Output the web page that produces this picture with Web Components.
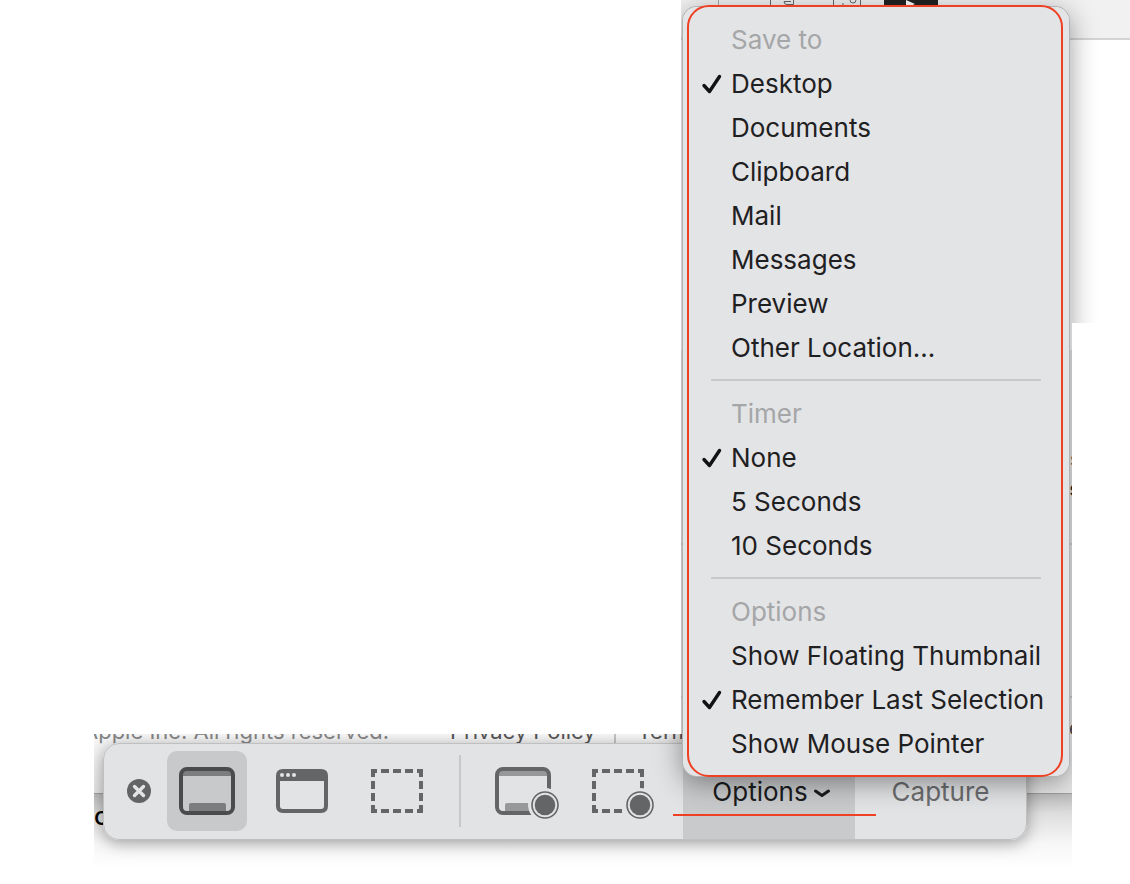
<!DOCTYPE html>
<html lang="en">
<head>
<meta charset="utf-8">
<title>Screenshot toolbar</title>
<style>
html, body { margin: 0; background: #fff; font-family: Inter, "Liberation Sans", sans-serif; }
</style>
</head>
<body>
<capture-page></capture-page>

<template id="t-page">
<style>
:host { display: flex; flex-direction: column; min-height: 100vh; overflow: hidden; }
page-backdrop { flex: 1; margin-left: 681px; }
.strip { position: relative; box-sizing: border-box; height: 150px; margin: 0 58px 0 94px; padding: 9px 45px 0 9px; }
footer-backdrop { position: absolute; inset: 0; }
.mark { position: absolute; left: -10px; right: -21px; top: 70px; height: 2px; background: #ee4023; }
</style>
<page-backdrop></page-backdrop>
<div class="strip">
  <footer-backdrop></footer-backdrop>
  <capture-toolbar>
    <tool-button kind="screen" label="Capture Entire Screen" selected></tool-button>
    <tool-button kind="window" label="Capture Selected Window"></tool-button>
    <tool-button kind="area" label="Capture Selected Portion"></tool-button>
    <tool-button slot="record" kind="record-screen" label="Record Entire Screen"></tool-button>
    <tool-button slot="record" kind="record-area" label="Record Selected Portion"></tool-button>
    <options-menu slot="menu">
      <menu-group label="Save to">
        <menu-choice checked>Desktop</menu-choice>
        <menu-choice>Documents</menu-choice>
        <menu-choice>Clipboard</menu-choice>
        <menu-choice>Mail</menu-choice>
        <menu-choice>Messages</menu-choice>
        <menu-choice>Preview</menu-choice>
        <menu-choice>Other Location...</menu-choice>
      </menu-group>
      <menu-group label="Timer">
        <menu-choice checked>None</menu-choice>
        <menu-choice>5 Seconds</menu-choice>
        <menu-choice>10 Seconds</menu-choice>
      </menu-group>
      <menu-group label="Options">
        <menu-choice>Show Floating Thumbnail</menu-choice>
        <menu-choice checked>Remember Last Selection</menu-choice>
        <menu-choice>Show Mouse Pointer</menu-choice>
      </menu-group>
    </options-menu>
    <div class="mark" slot="menu"></div>
  </capture-toolbar>
</div>
</template>

<template id="t-backdrop">
<style>
:host { display: flex; flex-direction: column; }
.head { height: 38px; background: #f1f1f1; border-bottom: 2px solid #d4d4d4; }
.head svg { display: block; }
.blank { height: 283px; }
.side { flex: 1; margin-right: 58px; overflow: hidden; background: linear-gradient(#fff 27px, #ececec 27px); }
.rule { height: 2px; background: #cfcfcf; }
.gap1, .gap2 { box-sizing: border-box; margin-right: -8px; font-size: 19px; line-height: 30px; text-align: right; color: #555; }
.gap1 { height: 220px; padding-top: 92px; }
.gap2 { height: 151px; }
.bold { font-weight: 600; color: #222; }
.last { margin-right: -8px; font-size: 19px; line-height: 10px; padding-top: 26px; text-align: right; color: #444; }
</style>
<div class="head">
<svg width="449" height="8" viewBox="0 0 449 8" fill="none" stroke="#666" stroke-width="1" aria-hidden="true">
<path d="M37.500 0V8" stroke="#aaa"/><path d="M89.500 0V8M112.500 0V4.500H106Q103 4.500 103 1.500H110M152.500 0V8M179.500 0V8"/><circle cx="172" cy="0" r="3"/><path d="M161 4h2"/>
<rect x="203" y="0" width="54" height="8" fill="#222" stroke="none"/><path d="M225 0L234 4L225 8Z" fill="#fff" stroke="none"/>
</svg>
</div>
<div class="blank"></div>
<div class="side"><div class="gap1"><div>l</div><div>s</div><div class="bold">s</div></div><div class="rule"></div><div class="gap2"></div><div class="rule"></div><div class="last">e</div></div>
</template>

<template id="t-footer">
<style>
:host { display: block; overflow: hidden; }
.win { display: flex; box-sizing: border-box; height: 60px; overflow: hidden; white-space: nowrap; background: linear-gradient(#f8f8f8, #e6e6e6); border-bottom: 1px solid #a0a0a0; font-size: 22px; line-height: 24px; color: #858585; }
.win span, .win a { margin-top: -15px; height: 24px; text-decoration: none; }
.win span { width: 356px; text-indent: -11px; }
.win a { color: #555; }
.win i { width: 2px; height: 9px; margin: 0 22px 0 18px; background: #c4c4c4; }
.fade { height: 90px; background: linear-gradient(#bcbcbc, #dedede 20px, #f7f7f7 50px, #fff 75px); font-size: 25px; line-height: 44px; font-weight: 500; color: #000; }
.shade { position: absolute; top: 9px; left: 9px; right: 45px; height: 97px; border-radius: 16px; box-shadow: 0 3px 16px rgba(0,0,0,.36); }
</style>
<div class="win"><span>Apple Inc. All rights reserved.</span><a href="#privacy">Privacy Policy</a><i></i><a href="#terms">Terms</a></div>
<div class="fade">c</div>
<div class="shade"></div>
</template>

<template id="t-toolbar">
<style>
:host { display: flex; box-sizing: border-box; height: 97px; position: relative; border: 1px solid #bfc0c1; border-radius: 16px; background: #e2e3e5; align-items: flex-start; }
button { font: inherit; border: 0; padding: 0; background: none; }
.close { width: 24px; height: 24px; margin: 35px 16px 0 23px; flex: none; }
svg { display: block; }
.tools { display: flex; gap: 15px; margin-top: 7px; }
.line { width: 2px; height: 72px; margin: 11px 22px 0; background: #c7c8ca; flex: none; }
.opt { position: relative; align-self: stretch; width: 172px; margin-left: 25px; flex: none; }
.opt button { display: flex; align-items: center; justify-content: center; gap: 5px; width: 100%; height: 100%; padding-left: 5px; background: #c9cacc; color: #1b1c1e; font-size: 26px; line-height: 32px; }
.cap { flex: 1; align-self: stretch; color: #6b6c6e; font-size: 26px; line-height: 32px; border-radius: 0 15px 15px 0; }
</style>
<button class="close" aria-label="Close"><svg width="24" height="24" viewBox="0 0 24 24"><circle cx="12" cy="12" r="12" fill="#636466"/><path d="M7.500 7.500L16.500 16.500M16.500 7.500L7.500 16.500" stroke="#e3e4e6" stroke-width="3.400" stroke-linecap="round"/></svg></button>
<div class="tools"><slot></slot></div>
<div class="line"></div>
<div class="tools"><slot name="record"></slot></div>
<div class="opt"><button aria-haspopup="menu" aria-expanded="true">Options<svg width="18" height="12" viewBox="0 0 18 12" fill="none" stroke="#1b1c1e" stroke-width="3" stroke-linecap="round" stroke-linejoin="round" aria-hidden="true"><path d="M2.500 5L9 9.500L15.500 5"/></svg></button><slot name="menu"></slot></div>
<button class="cap">Capture</button>
</template>

<template id="t-menu">
<style>
:host { position: absolute; left: 0; bottom: 63px; width: 386px; z-index: 2; }
.shadow { position: absolute; inset: 0; border-radius: 14px; box-shadow: 0 0 0 1px #b2b3b4, 0 6px 28px rgba(0,0,0,.42);
  clip-path: polygon(-2px -8px, calc(100% + 40px) -8px, calc(100% + 40px) 316px, calc(100% + 3px) 316px, calc(100% + 3px) calc(100% + 50px), -50px calc(100% + 50px), -50px calc(100% - 42px), -2px calc(100% - 42px)); }
.panel { position: relative; padding: 11px 0 10px; border-radius: 14px; background: #e3e4e6; }
.frame { position: absolute; inset: -2px 6px -1px 4px; border: 2px solid #ee4023; border-radius: 22px; pointer-events: none; }
</style>
<div class="shadow"></div>
<div class="panel" role="menu"><slot></slot></div>
<div class="frame"></div>
</template>

<template id="t-group">
<style>
:host { display: block; }
:host(:not(:first-child))::before { content: ""; display: block; height: 2px; margin: 9px 28px 11px; background: #c8c9cb; }
.title { padding-left: 48px; font-size: 26px; line-height: 44px; color: #a5a6a8; }
</style>
<div class="title"></div><slot></slot>
</template>

<template id="t-choice">
<style>
:host { display: block; }
button { display: flex; align-items: center; width: 100%; height: 44px; padding: 0 0 0 18px; border: 0; background: none; font: inherit; font-size: 26px; line-height: 44px; color: #1f2022; white-space: nowrap; text-align: left; }
svg { flex: none; width: 22px; height: 22px; margin-right: 8px; visibility: hidden; }
:host([checked]) svg { visibility: visible; }
</style>
<button role="menuitemradio"><svg viewBox="0 0 22 22" fill="none" stroke="#111214" stroke-width="3.400" stroke-linecap="round" stroke-linejoin="round" aria-hidden="true"><path d="M3 12.500L8.500 18.500L18.500 3.500"/></svg><slot></slot></button>
</template>

<script>
const clone = id => document.getElementById(id).content.cloneNode(true);
function define(name, id, setup) {
  customElements.define(name, class extends HTMLElement {
    constructor() {
      super();
      this.attachShadow({ mode: "open" }).append(clone(id));
    }
    connectedCallback() { if (setup) setup(this); }
  });
}

// Dashed selection outline: 52 by 44 with 4px strokes
const dashes = (() => {
  let s = "";
  for (const [x, w] of [[14, 6], [24, 8], [36, 8], [48, 8], [60, 6]])
    for (const y of [18, 58]) s += `<rect x="${x}" y="${y}" width="${w}" height="4"/>`;
  for (const y of [18, 30, 42, 54])
    for (const x of [14, 62]) s += `<rect x="${x}" y="${y}" width="4" height="8"/>`;
  return s;
})();
const screen = `<path d="M16 20H64V25H16ZM22 60V54Q22 52 24 52H57Q59 52 59 54V60Z" opacity=".6"/><rect x="14" y="18" width="52" height="44" rx="6" fill="none" stroke="currentColor" stroke-width="4"/>`;
const record = shape => `<mask id="m"><rect width="80" height="80" fill="#fff"/><circle cx="62" cy="54" r="17" fill="#000"/></mask><g mask="url(#m)">${shape}</g><circle cx="62" cy="54" r="13" fill="none" stroke="currentColor" stroke-width="1.600"/><circle cx="62" cy="54" r="10.300"/>`;
const icons = {
  screen,
  window: `<path fill-rule="evenodd" d="M21 18H59Q66 18 66 25V55Q66 62 59 62H21Q14 62 14 55V25Q14 18 21 18ZM18 30V55Q18 58 21 58H59Q62 58 62 55V30Z"/><g fill="#e3e4e6"><circle cx="20" cy="24" r="2"/><circle cx="26" cy="24" r="2"/><circle cx="32" cy="24" r="2"/></g>`,
  area: dashes,
  "record-screen": record(screen),
  "record-area": record(dashes)
};

customElements.define("tool-button", class extends HTMLElement {
  constructor() { super(); this.attachShadow({ mode: "open" }); }
  connectedCallback() {
    this.shadowRoot.innerHTML = `<style>
:host { display: block; color: #646567; }
:host([selected]) { color: #4a4b4d; }
button { display: block; width: 80px; height: 80px; padding: 0; border: 0; border-radius: 10px; background: none; color: inherit; }
:host([selected]) button { background: #c8c9cb; }
svg { display: block; }
</style><button aria-label="${this.getAttribute("label")}"><svg width="80" height="80" viewBox="0 0 80 80" fill="currentColor" aria-hidden="true">${icons[this.getAttribute("kind")]}</svg></button>`;
  }
});

define("page-backdrop", "t-backdrop");
define("footer-backdrop", "t-footer");
define("capture-toolbar", "t-toolbar");
define("options-menu", "t-menu");
define("menu-group", "t-group", el => {
  el.shadowRoot.querySelector(".title").textContent = el.getAttribute("label");
});
define("menu-choice", "t-choice", el => {
  el.shadowRoot.querySelector("button").setAttribute("aria-checked", el.hasAttribute("checked"));
});
define("capture-page", "t-page");
</script>
</body>
</html>
